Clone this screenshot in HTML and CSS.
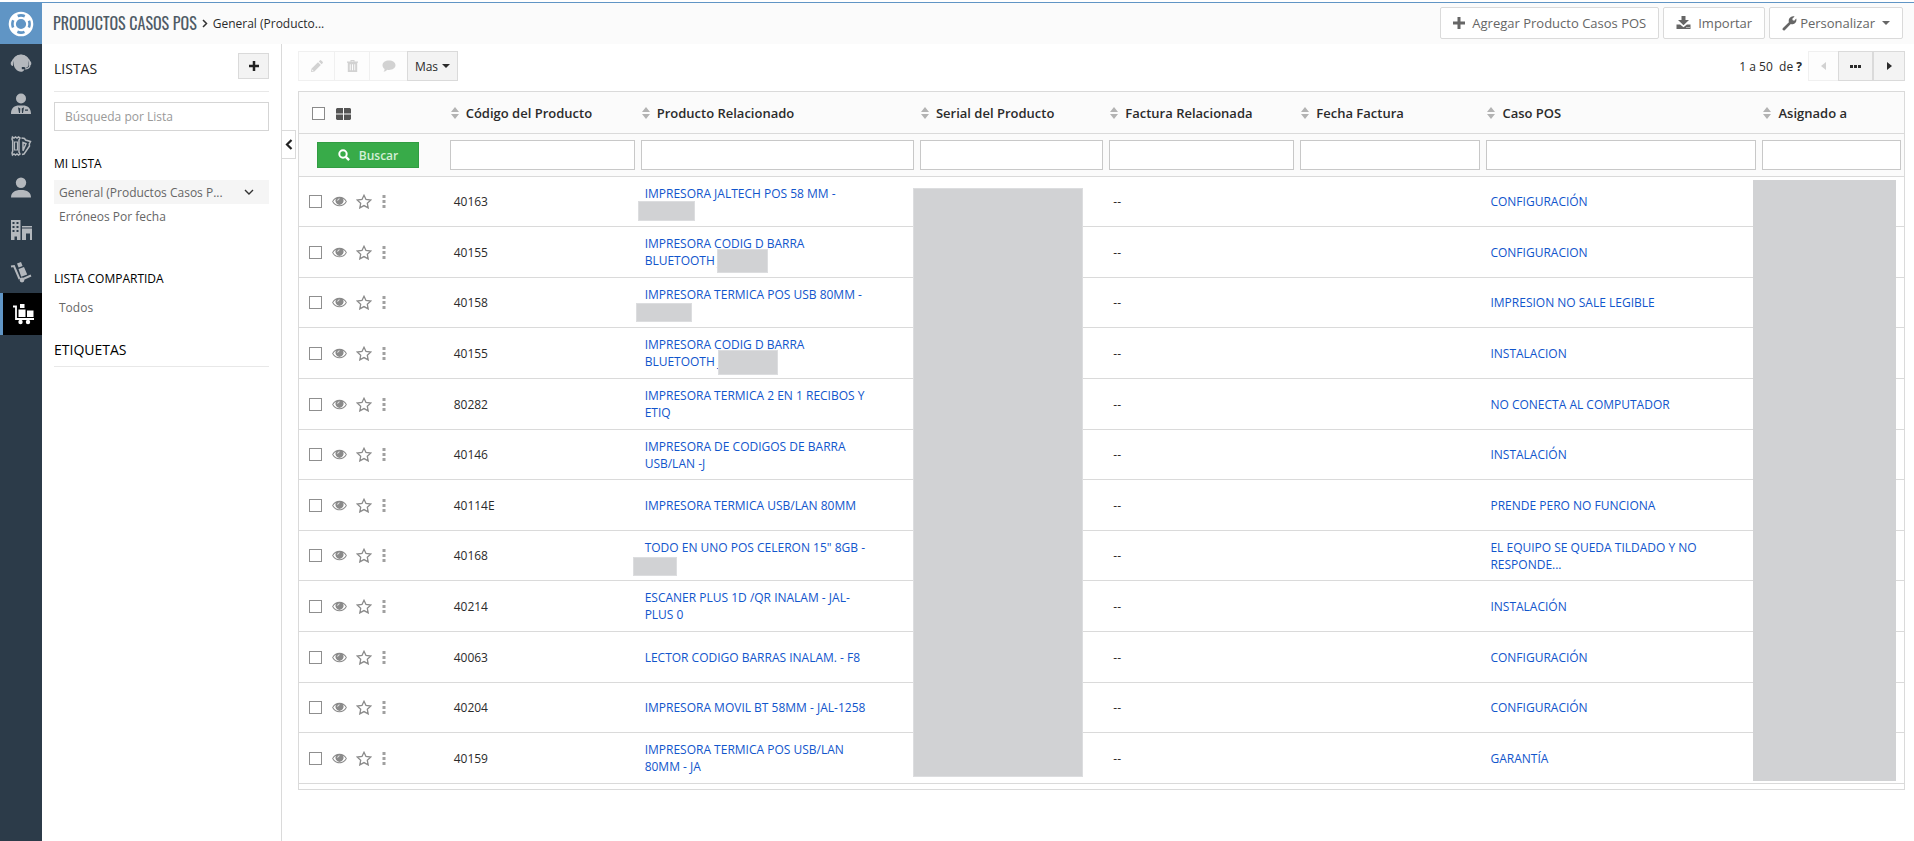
FILE: index.html
```
<!DOCTYPE html>
<html lang="es">
<head>
<meta charset="utf-8">
<title>Productos Casos POS</title>
<link rel="stylesheet" href="styles.css">
</head>
<body>
<svg class="sprite" aria-hidden="true">
  <symbol id="i-eye" viewBox="0 0 14 10"><path fill-rule="evenodd" d="M7 .5C3.900.5 1.400 2.300.1 5c1.300 2.700 3.800 4.500 6.900 4.500s5.600-1.800 6.900-4.500C12.600 2.300 10.100.5 7 .5zM7 8.600C4.500 8.600 2.400 7.200 1.100 5 1.700 4 2.600 3.100 3.600 2.500A4 4 0 0 0 7 8.200a4 4 0 0 0 3.400-5.700c1 .6 1.900 1.500 2.500 2.500C11.600 7.200 9.500 8.600 7 8.600z"/><circle cx="7" cy="4.300" r="3"/><path d="M5.300 4.200A1.800 1.800 0 0 1 7 2.500" fill="none" stroke="#fff" stroke-width=".8"/></symbol>
  <symbol id="i-star" viewBox="0 0 16 15"><path fill="none" stroke="currentColor" stroke-width="1.300" d="M8 1.300l2 4.200 4.700.6-3.400 3.200.9 4.600L8 11.600l-4.200 2.300.9-4.600L1.300 6.100 6 5.500z"/></symbol>
  <symbol id="i-dots" viewBox="0 0 4 13"><path d="M.5 0h3v3h-3zM.5 5h3v3h-3zM.5 10h3v3h-3z"/></symbol>
  <symbol id="i-sort" viewBox="0 0 8 12"><path d="M4 0l4 5H0zM4 12L0 7h8z"/></symbol>
  <symbol id="i-plus" viewBox="0 0 12 12"><path d="M4.500 0h3v4.500H12v3H7.500V12h-3V7.500H0v-3h4.500z"/></symbol>
</svg>

<header class="topbar">
  <a class="logo" href="#" aria-label="Inicio">
    <svg width="26" height="26" viewBox="0 0 26 26"><circle cx="13" cy="13" r="8.700" fill="none" stroke="#fff" stroke-width="7.200"/><circle cx="13" cy="13" r="8.600" fill="none" stroke="#6095c5" stroke-width="2.600" stroke-dasharray="7.300 6.208" stroke-dashoffset="3.650"/></svg>
  </a>
  <h1 class="title">PRODUCTOS CASOS POS</h1>
  <svg class="crumb" width="6" height="9" viewBox="0 0 6 9"><path d="M1 1l3.500 3.500L1 8" fill="none" stroke="#333" stroke-width="1.500"/></svg>
  <span class="view">General (Producto...</span>
  <div class="actions">
    <button class="act"><svg width="12" height="12"><use href="#i-plus"/></svg>Agregar Producto Casos POS</button>
    <button class="act"><svg width="15" height="14" viewBox="0 0 15 14"><path fill-rule="evenodd" d="M5.500 0h4v4H13L7.500 9.200 2 4h3.500zM.5 8.500h3.600l3.400 2.700 3.400-2.700h3.600V13H.5zM10.500 11v1h1v-1zM12.500 11v1h1v-1z"/></svg>Importar</button>
    <button class="act act-wrench"><svg width="15" height="15" viewBox="0 0 15 15"><path d="M14.200 2.600c.9 2.600-.7 5.400-3.500 5.700-.7.100-1.300 0-1.900-.2L3 14c-.7.700-1.600.6-2.100.1s-.6-1.400.1-2.100l5.900-5.800C6 3.300 8 .5 11 .3c.6 0 1.100.1 1.600.3L10.300 2.800l.4 1.500 1.500.4z"/></svg>Personalizar<i class="caret"></i></button>
  </div>
</header>

<div class="body">
  <nav class="rail" aria-label="Módulos">
    <a href="#" aria-label="Casos"><svg width="22" height="22" viewBox="0 0 22 22"><path d="M2.200 12A8.900 8.900 0 0 1 19.800 12" fill="none" stroke="currentColor" stroke-width="1.500"/><path d="M1 10.500h2V15c-1.500 0-2.300-1-2.300-2.200zM21 10.500h-2V15c1.500 0 2.300-1 2.300-2.200z"/><path d="M11 3.600c4.300 0 7.600 2.900 7.600 7.200v3.400c-.5 1.800-1.900 2.600-3.800 2.800v-1h-3v2.200h2.800c-1 1.800-2.200 2.600-3.600 2.600-3.800 0-7.600-4-7.600-9.800 0-4.400 3.300-7.400 7.600-7.400z"/><path d="M20 14.500c-.5 2.200-2.200 3.300-5 3.500" fill="none" stroke="currentColor" stroke-width="1.200"/></svg></a>
    <a href="#" aria-label="Contactos"><svg width="22" height="22" viewBox="0 0 22 22"><circle cx="11" cy="5.500" r="5"/><path fill-rule="evenodd" d="M1 21c0-5 2-7.500 6.500-8.500h7C19 13.500 21 16 21 21zM8 14.200L9 20h1l.3-4.500zM14 14.200l-2.300 1.300L12 20h1zM15 16.500v1.200h3v-1.200z"/></svg></a>
    <a href="#" aria-label="Tickets"><svg width="22" height="22" viewBox="0 0 22 22"><path d="M2.500 2l1.500 1 1.500-1L7 3l1.500-1 1.500 1-1 2v12l1 2-1.500 1L7 19l-1.500 1L4 19l-1.500 1-.5-2 .7-2V6L2 4z" fill="none" stroke="currentColor" stroke-width="1.500"/><path d="M4.500 7h3v8h-3z" fill="none" stroke="currentColor" stroke-width="1.200"/><path d="M11.500 3l3 .5 1 1.500 5 1.500-1.200 2.500.2 2-5.500 8-2 .5M13 7.500l3 1.200-3 7z" fill="none" stroke="currentColor" stroke-width="1.500"/></svg></a>
    <a href="#" aria-label="Usuarios"><svg width="22" height="22" viewBox="0 0 22 22"><circle cx="11" cy="5.700" r="5.200"/><path d="M1 20.500c0-5 3.500-7.500 10-7.500s10 2.500 10 7.500z"/></svg></a>
    <a href="#" aria-label="Organizaciones"><svg width="22" height="22" viewBox="0 0 22 22"><path fill-rule="evenodd" d="M1 1h9.500v20H7v-3.500H4.500V21H1zM2.500 3v2h2V3zM6.500 3v2h2V3zM2.500 7v2h2V7zM6.500 7v2h2V7zM2.500 11v2h2v-2zM6.500 11v2h2v-2z"/><path d="M12 7h10v1.500H12zM12 9.500h10V21h-2v-6.500h-4V21h-4z"/></svg></a>
    <a href="#" aria-label="Productos"><svg width="22" height="22" viewBox="0 0 22 22"><path d="M1 5.500l3-.5L9.500 18M12 18.500l9-4" fill="none" stroke="currentColor" stroke-width="2"/><path d="M7 2.500L11 1l1.600 4-4 1.500zM8.500 8l5.500-2 3.200 7.500-6 2.300z"/><circle cx="12" cy="19" r="2.400"/></svg></a>
    <a href="#" class="on" aria-label="Productos Casos POS" aria-current="page"><svg width="22" height="22" viewBox="0 0 22 22"><path d="M0 3.500h3v12.500h18" fill="none" stroke="currentColor" stroke-width="1.800"/><path d="M7 1h4.500v4H7zM5.500 6.500h7V14h-7zM14 7.500h6.500V14H14z"/><circle cx="7.500" cy="19" r="2.200"/><circle cx="15" cy="19" r="2.200"/></svg></a>
  </nav>

  <aside class="side">
    <div class="side-head"><h2>LISTAS</h2><button class="add" aria-label="Agregar lista"><svg width="10" height="10" viewBox="0 0 12 12"><use href="#i-plus" width="12" height="12"/></svg></button></div>
    <input class="search" type="text" placeholder="Búsqueda por Lista" aria-label="Búsqueda por Lista">
    <h3>MI LISTA</h3>
    <ul>
      <li class="sel"><a href="#">General (Productos Casos P...</a><svg width="10" height="7" viewBox="0 0 10 7"><path d="M1 1l4 4 4-4" fill="none" stroke="#333" stroke-width="1.400"/></svg></li>
      <li><a href="#">Erróneos Por fecha</a></li>
    </ul>
    <h3 class="shared">LISTA COMPARTIDA</h3>
    <ul><li><a href="#">Todos</a></li></ul>
    <h2 class="tags">ETIQUETAS</h2>
    <button class="fold" aria-label="Ocultar panel"><svg width="8" height="11" viewBox="0 0 8 11"><path d="M6.500 1L2 5.500 6.500 10" fill="none" stroke="#222" stroke-width="2.200"/></svg></button>
  </aside>

  <main class="main">
    <div class="tools">
      <div class="group">
        <button class="tb off tb-edit" aria-label="Editar" disabled><svg width="12" height="12" viewBox="0 0 12 12"><path fill-rule="evenodd" d="M8.800.4a1 1 0 0 1 1.400 0l1.400 1.400a1 1 0 0 1 0 1.400l-1 1-2.800-2.800zM7 2.200L9.800 5 3.400 11.400.4 12 0 11.600l.6-3zM1.300 9.400L1 11l1.600-.3z"/></svg></button>
        <button class="tb off tb-del" aria-label="Eliminar" disabled><svg width="11" height="12" viewBox="0 0 11 12"><path fill-rule="evenodd" d="M3.500 0h4v1.500H11v1.200h-.8V12H.8V2.700H0V1.500h3.500zM4.500 1v.6h2V1zM2.800 4.200v6h.9v-6zM5 4.200v6h1v-6zM7.300 4.200v6h.9v-6z"/></svg></button>
        <button class="tb off tb-com" aria-label="Comentar" disabled><svg width="14" height="12" viewBox="0 0 14 12"><path d="M7 .5c3.700 0 6.500 2 6.500 4.700S10.700 9.900 7 9.900c-.6 0-1.200 0-1.700-.2C4.200 11 2.700 11.600 1.500 11.700c.7-.8 1.100-1.600 1.100-2.700C1.200 8.100.5 6.700.5 5.200.5 2.500 3.300.5 7 .5z"/></svg></button>
        <button class="tb tb-more">Mas<i class="caret"></i></button>
      </div>
      <div class="group">
        <span class="range">1 a 50 &nbsp;de <b>?</b></span>
        <button class="tb off pg" aria-label="Anterior" disabled><svg width="5" height="8" viewBox="0 0 5 8"><path d="M5 0v8L0 4z"/></svg></button>
        <button class="tb pg-jump" aria-label="Ir a página"><svg width="11" height="3" viewBox="0 0 11 3"><path d="M0 0h3v3H0zM4 0h3v3H4zM8 0h3v3H8z"/></svg></button>
        <button class="tb pg" aria-label="Siguiente"><svg width="5" height="8" viewBox="0 0 5 8"><path d="M0 0v8l5-4z"/></svg></button>
      </div>
    </div>

    <div class="grid">
      <table>
        <colgroup><col class="c0"><col class="c1"><col class="c2"><col class="c3"><col class="c4"><col class="c5"><col class="c6"><col class="c7"></colgroup>
        <thead>
          <tr class="heads">
            <th><div class="pick"><input type="checkbox" aria-label="Seleccionar todo"><svg width="15" height="12" viewBox="0 0 15 12"><path d="M1 0h6v5.500H0V1zM8 0h6l1 1v4.500H8zM0 6.500h7V12H1l-1-1zM8 6.500h7V11l-1 1H8z"/></svg></div></th>
            <th><svg class="sort" width="8" height="12"><use href="#i-sort"/></svg>Código del Producto</th>
            <th><svg class="sort" width="8" height="12"><use href="#i-sort"/></svg>Producto Relacionado</th>
            <th><svg class="sort" width="8" height="12"><use href="#i-sort"/></svg>Serial del Producto</th>
            <th><svg class="sort" width="8" height="12"><use href="#i-sort"/></svg>Factura Relacionada</th>
            <th><svg class="sort" width="8" height="12"><use href="#i-sort"/></svg>Fecha Factura</th>
            <th><svg class="sort" width="8" height="12"><use href="#i-sort"/></svg>Caso POS</th>
            <th><svg class="sort" width="8" height="12"><use href="#i-sort"/></svg>Asignado a</th>
          </tr>
          <tr class="filters">
            <td><button class="find"><svg width="12" height="12" viewBox="0 0 12 12"><circle cx="5" cy="5" r="3.700" fill="none" stroke="#fff" stroke-width="2"/><path d="M7.800 7.800l3.300 3.300" stroke="#fff" stroke-width="2.400"/></svg>Buscar</button></td>
            <td><input type="text" aria-label="Filtrar código"></td>
            <td><input type="text" aria-label="Filtrar producto"></td>
            <td><input type="text" aria-label="Filtrar serial"></td>
            <td><input type="text" aria-label="Filtrar factura"></td>
            <td><input type="text" aria-label="Filtrar fecha"></td>
            <td><input type="text" aria-label="Filtrar caso"></td>
            <td><input type="text" aria-label="Filtrar asignado"></td>
          </tr>
        </thead>
        <tbody id="rows"></tbody>
      </table>
    </div>
  </main>
</div>
<script src="rows.js"></script>
</body>
</html>
```

FILE: rows.js
```
const rows = [
  ["40163", "IMPRESORA JALTECH POS 58 MM -<br>&nbsp;", "CONFIGURACIÓN", "m1"],
  ["40155", "IMPRESORA CODIG D BARRA<br>BLUETOOTH J", "CONFIGURACION", "m2"],
  ["40158", "IMPRESORA TERMICA POS USB 80MM -<br>&nbsp;", "IMPRESION NO SALE LEGIBLE", "m3"],
  ["40155", "IMPRESORA CODIG D BARRA<br>BLUETOOTH J", "INSTALACION", "m4"],
  ["80282", "IMPRESORA TERMICA 2 EN 1 RECIBOS Y<br>ETIQ", "NO CONECTA AL COMPUTADOR"],
  ["40146", "IMPRESORA DE CODIGOS DE BARRA<br>USB/LAN -J", "INSTALACIÓN"],
  ["40114E", "IMPRESORA TERMICA USB/LAN 80MM", "PRENDE PERO NO FUNCIONA"],
  ["40168", "TODO EN UNO POS CELERON 15\" 8GB -<br>&nbsp;", "EL EQUIPO SE QUEDA TILDADO Y NO<br>RESPONDE...", "m5"],
  ["40214", "ESCANER PLUS 1D /QR INALAM - JAL-<br>PLUS 0", "INSTALACIÓN"],
  ["40063", "LECTOR CODIGO BARRAS INALAM. - F8", "CONFIGURACIÓN"],
  ["40204", "IMPRESORA MOVIL BT 58MM - JAL-1258", "CONFIGURACIÓN"],
  ["40159", "IMPRESORA TERMICA POS USB/LAN<br>80MM - JA", "GARANTÍA"]
];
document.getElementById("rows").innerHTML = rows.map(([code, product, issue, mask], i) => `
<tr>
  <td><div class="ops"><input type="checkbox" aria-label="Seleccionar ${code}"><svg class="eye" width="15" height="11"><use href="#i-eye"/></svg><svg class="star" width="16" height="15"><use href="#i-star"/></svg><svg class="dots" width="4" height="13"><use href="#i-dots"/></svg></div></td>
  <td>${code}</td>
  <td><a href="#">${product}</a>${mask ? `<span class="mask ${mask}"></span>` : ""}</td>
  <td>${i === 0 ? '<span class="mask serial"></span>' : ""}</td>
  <td>--</td>
  <td></td>
  <td><a href="#">${issue}</a></td>
  <td>${i === 0 ? '<span class="mask owner"></span>' : ""}</td>
</tr>`).join("");
```

FILE: styles.css
```
* { box-sizing: border-box; }
body {
  margin: 0;
  min-height: 100vh;
  display: flex;
  flex-direction: column;
  font: 12px/17px "Open Sans", "Noto Sans", sans-serif;
  color: #2b2b2b;
  background: #fff;
}
a { color: inherit; text-decoration: none; }
button, input { font: inherit; color: inherit; margin: 0; }
svg { fill: currentColor; flex: none; }
h1, h2, h3, ul { margin: 0; padding: 0; font-weight: 400; list-style: none; }
.sprite { position: absolute; width: 0; height: 0; }
.caret { border: 4px solid transparent; border-top-color: currentColor; border-bottom: 0; }

.topbar {
  display: flex;
  align-items: center;
  height: 42px;
  margin-top: 2px;
  padding: 0 11px 1px 0;
  border-top: 1px solid #6095c5;
  background: #fbfbfb;
}
.logo {
  display: flex;
  align-items: center;
  justify-content: center;
  align-self: flex-start;
  width: 42px;
  height: 41px;
  background: #6095c5;
}
.title {
  margin-left: 11px;
  font: 400 16px/24px Oswald, "Open Sans Condensed", "Roboto Condensed", "Liberation Sans Narrow", sans-serif;
  color: #4f5b66;
}
.crumb { margin: 0 5px; }
.actions { display: flex; gap: 4px; margin-left: auto; }
.act {
  display: flex;
  align-items: center;
  gap: 7px;
  height: 32px;
  padding: 0 12px;
  border: 1px solid #dadada;
  border-radius: 2px;
  background: #fff;
  color: #666;
  font-size: 13px;
}
.act-wrench { gap: 3px; }
.act .caret { margin-left: 4px; }

.body { display: flex; flex: 1; }
.rail { width: 42px; background: #2c3b49; color: #b4b8bd; }
.rail a { display: flex; align-items: center; justify-content: center; height: 42px; }
.rail a:first-child { height: 39px; padding-bottom: 3px; }
.rail .on { background: #000; color: #fff; border-left: 3px solid #6095c5; padding-left: 3px; }

.side {
  position: relative;
  width: 240px;
  padding: 9px 12px 0;
  border-right: 1px solid #dadada;
}
.side h2 { font-size: 14px; color: #222; }
.side-head {
  display: flex;
  justify-content: space-between;
  height: 39px;
  border-bottom: 1px solid #e8e8e8;
}
.side-head h2 { padding-top: 7px; }
.add {
  display: flex;
  align-items: center;
  justify-content: center;
  width: 31px;
  height: 26px;
  border: 1px solid #dadada;
  background: #f3f3f3;
  color: #222;
}
.search {
  display: block;
  width: 100%;
  height: 29px;
  margin-top: 10px;
  padding: 0 10px;
  border: 1px solid #d5d5d5;
}
.search::placeholder { color: #999; opacity: 1; }
.side h3 { margin-top: 24px; margin-bottom: 8px; font-size: 12px; color: #000; }
.side li {
  display: flex;
  align-items: center;
  justify-content: space-between;
  height: 24px;
  padding: 0 15px 0 5px;
  color: #666;
}
.side .sel { background: #f5f5f5; }
.side h3.shared { margin-top: 42px; }
.side h2.tags {
  margin-top: 22px;
  padding-bottom: 8px;
  border-bottom: 1px solid #e8e8e8;
  color: #000;
}
.fold {
  position: absolute;
  top: 86px;
  left: 239px;
  display: flex;
  align-items: center;
  justify-content: center;
  width: 15px;
  height: 29px;
  padding: 0;
  border: 1px solid #dadada;
  background: #fff;
}

.main { flex: 1; min-width: 0; padding: 7px 9px 0 16px; }
.tools { display: flex; justify-content: space-between; margin-bottom: 10px; }
.group { display: flex; align-items: center; }
.tb {
  display: flex;
  align-items: center;
  justify-content: center;
  height: 30px;
  padding: 0;
  border: 1px solid #dadada;
  background: #f3f3f3;
}
.tb.off { border-color: #f0f0f0; background: #fdfdfd; color: #d2d2d2; }
.tb.off + .tb.off { border-left: 0; }
.tb-edit { width: 37px; }
.tb-del { width: 35px; }
.tb-com { width: 37px; border-right: 0; }
.tb-more { width: 51px; gap: 4px; }
.pg { width: 31px; }
.pg-jump { width: 36px; border-right-width: 2px; }
.pg-jump + .pg { border-left: 0; }
.pg.off { width: 30px; border-right: 0; }
.range { margin-right: 6px; }

.grid { border: 1px solid #dadada; padding-bottom: 5px; }
table { width: 100%; table-layout: fixed; border-collapse: separate; border-spacing: 0; }
.c0 { width: 9.200%; }
.c1 { width: 11.900%; }
.c2 { width: 17.400%; }
.c3 { width: 11.800%; }
.c4 { width: 11.900%; }
.c5 { width: 11.600%; }
.c6 { width: 17.200%; }
.c7 { width: 9%; }
th, td { padding: 0; border-bottom: 1px solid #dadada; text-align: left; }
thead { background: #fbfbfb; }
.heads { height: 42px; }
th { padding: 2px 0 0 4px; font-size: 13px; font-weight: 600; white-space: nowrap; }
.sort { margin-right: 7px; color: #b3b3b3; vertical-align: -1px; }
.pick { display: flex; align-items: center; gap: 11px; padding-left: 9px; color: #555; }
input[type="checkbox"] {
  appearance: none;
  width: 13px;
  height: 13px;
  border: 1px solid #8a8a8a;
  background: #fff;
}
.filters { height: 43px; }
.filters td { padding: 0 3px; }
.filters input { display: block; width: 100%; height: 30px; border: 1px solid #c8c8c8; background: #fff; }
.find {
  display: flex;
  align-items: center;
  justify-content: center;
  gap: 9px;
  width: 102px;
  height: 26px;
  margin-left: 15px;
  border: 1px solid #319c42;
  background: #38ab49;
  color: #d2efd6;
  font-weight: 600;
}
tbody tr { height: 51px; }
tbody tr:nth-child(5n+1), tbody tr:nth-child(5n+3) { height: 50px; }
tbody td { position: relative; padding-left: 7px; white-space: nowrap; }
tbody td a { color: #1155cc; }
.ops { display: flex; align-items: center; padding-left: 3px; color: #8a8a8a; }
.ops input { border-color: #8f8f8f; }
.eye { margin-left: 10px; }
.star { margin-left: 9px; }
.dots { margin-left: 10px; color: #a0a0a0; }

.mask { position: absolute; z-index: 1; border: 1px solid #dcdddf; background: #d1d2d4; }
.m1 { left: 0; top: 24px; width: 57px; height: 20px; }
.m2 { left: 79px; top: 22px; width: 51px; height: 24px; }
.m3 { left: -2px; top: 25px; width: 56px; height: 19px; }
.m4 { left: 80px; top: 22px; width: 60px; height: 25px; }
.m5 { left: -5px; top: 26px; width: 44px; height: 19px; }
.serial { left: -4px; top: 11px; width: 170px; height: 589px; }
.owner { left: -6px; top: 3px; width: 143px; height: 601px; border: 0; }
```
